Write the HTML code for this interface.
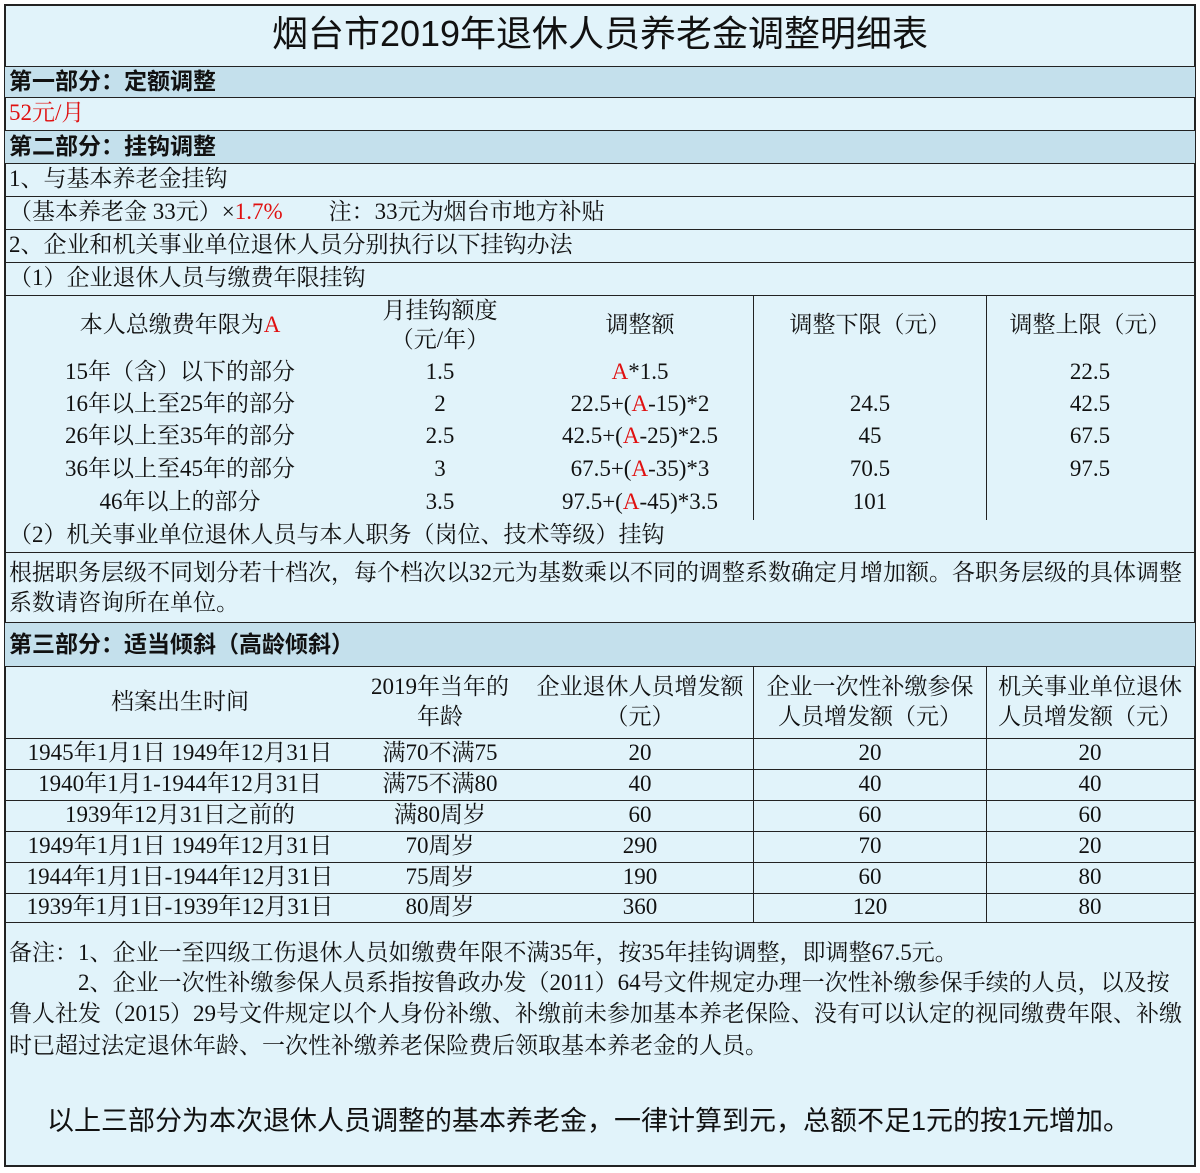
<!DOCTYPE html>
<html><head><meta charset="utf-8"><style>
*{margin:0;padding:0;box-sizing:border-box}
body{width:1200px;height:1173px;background:#fff;position:relative;overflow:hidden;font-family:"Liberation Serif","Noto Serif CJK SC","Noto Sans CJK SC",serif;color:#111}
.box{position:absolute;left:4px;top:4px;width:1192px;height:1163px;background:#e1f3fa;border:2px solid #222}
.h{position:absolute;left:4px;width:1192px;height:1px;background:#222}
.v{position:absolute;width:1px;background:#222}
.band{position:absolute;left:5px;width:1190px;background:#c4e0ec}
.t{position:absolute;white-space:nowrap;font-size:23px;line-height:26px;margin-top:-2px}
.b{font-family:"Liberation Sans","Noto Sans CJK SC",sans-serif;font-weight:bold}
.c{transform:translateX(-50%)}
.r{color:#e01010}
</style></head><body>
<div class="box"></div>
<div class="band" style="top:67px;height:30px"></div>
<div class="band" style="top:131px;height:32px"></div>
<div class="band" style="top:623px;height:43px"></div>
<div class="h" style="top:66px"></div>
<div class="h" style="top:97px"></div>
<div class="h" style="top:130px"></div>
<div class="h" style="top:163px"></div>
<div class="h" style="top:196px"></div>
<div class="h" style="top:229px"></div>
<div class="h" style="top:262px"></div>
<div class="h" style="top:295px"></div>
<div class="h" style="top:552px"></div>
<div class="h" style="top:622px"></div>
<div class="h" style="top:666px"></div>
<div class="h" style="top:738px"></div>
<div class="h" style="top:769px"></div>
<div class="h" style="top:800px"></div>
<div class="h" style="top:831px"></div>
<div class="h" style="top:862px"></div>
<div class="h" style="top:893px"></div>
<div class="h" style="top:922px"></div>
<div class="v" style="left:753px;top:295px;height:225px"></div>
<div class="v" style="left:986px;top:295px;height:225px"></div>
<div class="v" style="left:753px;top:666px;height:256px"></div>
<div class="v" style="left:986px;top:666px;height:256px"></div>

<div class="t c" style="left:600px;top:15px;font-size:36px;line-height:42px;font-family:'Liberation Sans','Noto Sans CJK SC',sans-serif">烟台市2019年退休人员养老金调整明细表</div>
<div class="t b" style="left:9px;top:70px">第一部分：定额调整</div>
<div class="t r" style="left:9px;top:102px">52元/月</div>
<div class="t b" style="left:9px;top:135px">第二部分：挂钩调整</div>
<div class="t" style="left:9px;top:168px">1、与基本养老金挂钩</div>
<div class="t" style="left:9px;top:201px">（基本养老金 33元）×<span class="r">1.7%</span>　　注：33元为烟台市地方补贴</div>
<div class="t" style="left:9px;top:234px">2、企业和机关事业单位退休人员分别执行以下挂钩办法</div>
<div class="t" style="left:9px;top:267px">（1）企业退休人员与缴费年限挂钩</div>

<div class="t c" style="left:180px;top:314px">本人总缴费年限为<span class="r">A</span></div>
<div class="t c" style="left:440px;top:300px">月挂钩额度</div>
<div class="t c" style="left:440px;top:329px">（元/年）</div>
<div class="t c" style="left:640px;top:314px">调整额</div>
<div class="t c" style="left:870px;top:314px">调整下限（元）</div>
<div class="t c" style="left:1090px;top:314px">调整上限（元）</div>

<div class="t c" style="left:180px;top:361px">15年（含）以下的部分</div><div class="t c" style="left:440px;top:361px">1.5</div><div class="t c" style="left:640px;top:361px"><span class="r">A</span>*1.5</div><div class="t c" style="left:1090px;top:361px">22.5</div>
<div class="t c" style="left:180px;top:393px">16年以上至25年的部分</div><div class="t c" style="left:440px;top:393px">2</div><div class="t c" style="left:640px;top:393px">22.5+(<span class="r">A</span>-15)*2</div><div class="t c" style="left:870px;top:393px">24.5</div><div class="t c" style="left:1090px;top:393px">42.5</div>
<div class="t c" style="left:180px;top:425px">26年以上至35年的部分</div><div class="t c" style="left:440px;top:425px">2.5</div><div class="t c" style="left:640px;top:425px">42.5+(<span class="r">A</span>-25)*2.5</div><div class="t c" style="left:870px;top:425px">45</div><div class="t c" style="left:1090px;top:425px">67.5</div>
<div class="t c" style="left:180px;top:458px">36年以上至45年的部分</div><div class="t c" style="left:440px;top:458px">3</div><div class="t c" style="left:640px;top:458px">67.5+(<span class="r">A</span>-35)*3</div><div class="t c" style="left:870px;top:458px">70.5</div><div class="t c" style="left:1090px;top:458px">97.5</div>
<div class="t c" style="left:180px;top:491px">46年以上的部分</div><div class="t c" style="left:440px;top:491px">3.5</div><div class="t c" style="left:640px;top:491px">97.5+(<span class="r">A</span>-45)*3.5</div><div class="t c" style="left:870px;top:491px">101</div>

<div class="t" style="left:9px;top:524px">（2）机关事业单位退休人员与本人职务（岗位、技术等级）挂钩</div>
<div class="t" style="left:9px;top:562px">根据职务层级不同划分若十档次，每个档次以32元为基数乘以不同的调整系数确定月增加额。各职务层级的具体调整</div>
<div class="t" style="left:9px;top:592px">系数请咨询所在单位。</div>
<div class="t b" style="left:9px;top:633px">第三部分：适当倾斜（高龄倾斜）</div>

<div class="t c" style="left:180px;top:691px">档案出生时间</div>
<div class="t c" style="left:440px;top:676px">2019年当年的</div>
<div class="t c" style="left:440px;top:706px">年龄</div>
<div class="t c" style="left:640px;top:676px">企业退休人员增发额</div>
<div class="t c" style="left:640px;top:706px">（元）</div>
<div class="t c" style="left:870px;top:676px">企业一次性补缴参保</div>
<div class="t c" style="left:870px;top:706px">人员增发额（元）</div>
<div class="t c" style="left:1090px;top:676px">机关事业单位退休</div>
<div class="t c" style="left:1090px;top:706px">人员增发额（元）</div>

<div class="t c" style="left:180px;top:742px">1945年1月1日 1949年12月31日</div><div class="t c" style="left:440px;top:742px">满70不满75</div><div class="t c" style="left:640px;top:742px">20</div><div class="t c" style="left:870px;top:742px">20</div><div class="t c" style="left:1090px;top:742px">20</div>
<div class="t c" style="left:180px;top:773px">1940年1月1-1944年12月31日</div><div class="t c" style="left:440px;top:773px">满75不满80</div><div class="t c" style="left:640px;top:773px">40</div><div class="t c" style="left:870px;top:773px">40</div><div class="t c" style="left:1090px;top:773px">40</div>
<div class="t c" style="left:180px;top:804px">1939年12月31日之前的</div><div class="t c" style="left:440px;top:804px">满80周岁</div><div class="t c" style="left:640px;top:804px">60</div><div class="t c" style="left:870px;top:804px">60</div><div class="t c" style="left:1090px;top:804px">60</div>
<div class="t c" style="left:180px;top:835px">1949年1月1日 1949年12月31日</div><div class="t c" style="left:440px;top:835px">70周岁</div><div class="t c" style="left:640px;top:835px">290</div><div class="t c" style="left:870px;top:835px">70</div><div class="t c" style="left:1090px;top:835px">20</div>
<div class="t c" style="left:180px;top:866px">1944年1月1日-1944年12月31日</div><div class="t c" style="left:440px;top:866px">75周岁</div><div class="t c" style="left:640px;top:866px">190</div><div class="t c" style="left:870px;top:866px">60</div><div class="t c" style="left:1090px;top:866px">80</div>
<div class="t c" style="left:180px;top:896px">1939年1月1日-1939年12月31日</div><div class="t c" style="left:440px;top:896px">80周岁</div><div class="t c" style="left:640px;top:896px">360</div><div class="t c" style="left:870px;top:896px">120</div><div class="t c" style="left:1090px;top:896px">80</div>

<div class="t" style="left:9px;top:942px">备注：1、企业一至四级工伤退休人员如缴费年限不满35年，按35年挂钩调整，即调整67.5元。</div>
<div class="t" style="left:9px;top:972px">　　　2、企业一次性补缴参保人员系指按鲁政办发（2011）64号文件规定办理一次性补缴参保手续的人员，以及按</div>
<div class="t" style="left:9px;top:1003px">鲁人社发（2015）29号文件规定以个人身份补缴、补缴前未参加基本养老保险、没有可以认定的视同缴费年限、补缴</div>
<div class="t" style="left:9px;top:1035px">时已超过法定退休年龄、一次性补缴养老保险费后领取基本养老金的人员。</div>
<div class="t" style="left:47px;top:1107px;font-size:27px;line-height:32px;font-family:'Liberation Sans','Noto Sans CJK SC',sans-serif">以上三部分为本次退休人员调整的基本养老金，一律计算到元，总额不足1元的按1元增加。</div>
</body></html>
